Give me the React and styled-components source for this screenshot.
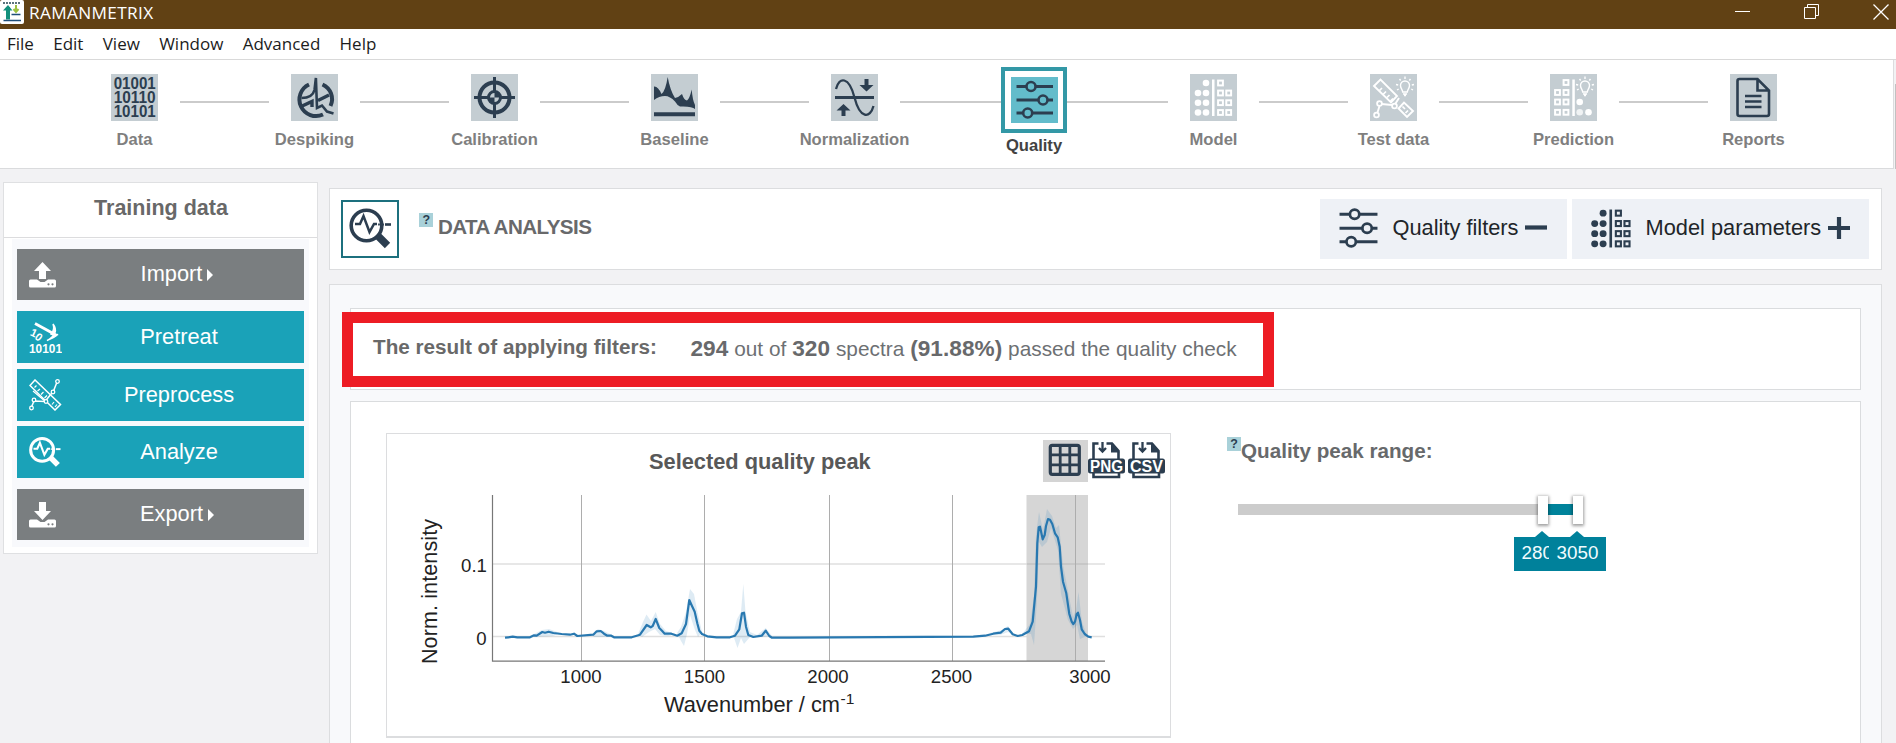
import React from "react";
import styled, { createGlobalStyle } from "styled-components";

const ink = "#2c3e50";
const sans = `"Liberation Sans", Arial, sans-serif`;

const GlobalStyle = createGlobalStyle`
  * { box-sizing: border-box; }
  body { margin: 0; background: #f2f2f4; font-family: ${sans}; overflow: hidden; }
`;

/* ---------- window frame ---------- */
const Window = styled.div`
  display: flex;
  flex-direction: column;
  height: 743px;
  overflow: hidden;
`;
const TitleBar = styled.header`
  display: flex;
  justify-content: space-between;
  height: 29px;
  flex: none;
  background: #614114;
  color: #fff;
`;
const AppTitle = styled.div`
  display: flex;
  align-items: flex-start;
  gap: 5px;
  font: 17.2px/25px "Open Sans", "Noto Sans", sans-serif;
  letter-spacing: 0.35px;
`;
const WindowControls = styled.div`
  display: flex;
  padding: 4px 7px 0 0;
  gap: 54px;
`;
const MenuBar = styled.nav`
  display: flex;
  flex: none;
  gap: 19.3px;
  height: 31px;
  padding-left: 7px;
  background: #fff;
  border-bottom: 1px solid #d9d9d9;
  color: #1c1c1c;
  font: 17px/30px "Open Sans", "Noto Sans", sans-serif;
`;

/* ---------- workflow stepper ---------- */
const StepperRow = styled.div`
  display: flex;
  flex: none;
  height: 109px;
`;
const Stepper = styled.div`
  display: flex;
  align-items: flex-start;
  width: 1894px;
  padding-left: 89px;
  background: #fff;
  border-right: 1px solid #dcdcde;
  border-bottom: 1px solid #dadbdd;
`;
const ScrollThumb = styled.div`
  width: 1px;
  margin: 24px 0 0 1px;
  background: #c1c1c1;
`;
const StepItem = styled.div`
  display: flex;
  flex-direction: column;
  align-items: center;
  flex: none;
  width: ${(p) => (p.$active ? 66 : 91)}px;
  padding-top: ${(p) => (p.$active ? 7 : 14)}px;
`;
const StepTile = styled.div`
  width: 47px;
  height: ${(p) => (p.$active ? 46 : 47)}px;
  background: ${(p) => (p.$active ? "#63bccb" : "#c4cdd2")};
  color: ${(p) => (p.$pale ? "#fff" : ink)};
  svg { display: block; }
`;
const ActiveFrame = styled.div`
  width: 66px;
  height: 66px;
  padding: 6px 5px 6px 6px;
  border: 4px solid #3398a6;
`;
const StepLabel = styled.div`
  margin-top: ${(p) => (p.$active ? 3 : 9)}px;
  font-size: 16.6px;
  line-height: 20px;
  font-weight: bold;
  white-space: nowrap;
  color: ${(p) => (p.$active ? "#424242" : "#7f7f7f")};
`;
const Connector = styled.div`
  flex: none;
  width: ${(p) => p.$length}px;
  height: 2px;
  margin-top: 41px;
  background: #cbcbcb;
`;

/* ---------- sidebar ---------- */
const Body = styled.div`
  display: flex;
  align-items: flex-start;
  flex: 1;
  min-height: 0;
  padding-left: 3px;
`;
const Sidebar = styled.aside`
  flex: none;
  width: 315px;
  height: 372px;
  margin-top: 13px;
  background: #fff;
  border: 1px solid #dfe0e2;
`;
const SidebarTitle = styled.h2`
  margin: 0;
  height: 55px;
  padding-left: 1px;
  border-bottom: 1px solid #dcdcde;
  text-align: center;
  font-size: 21.5px;
  line-height: 50px;
  color: #686868;
`;
const ActionList = styled.div`
  display: flex;
  flex-direction: column;
  width: 297px;
  height: 308px;
  margin: 1px 0 0 8px;
  padding: 10px 5px 0;
  background: #f8f9fc;
`;
const Action = styled.button`
  display: flex;
  align-items: center;
  flex: none;
  height: ${(p) => (p.$teal ? 52 : 51)}px;
  margin: 0 0 ${(p) => p.$gap}px;
  padding: 0 0 0 12px;
  border: 0;
  background: ${(p) => (p.$teal ? "#1aa2b8" : "#7a7e80")};
  color: #fff;
  font: 21.8px/24px ${sans};
  svg { flex: none; }
`;
const ActionText = styled.span`
  flex: 1;
  padding-right: ${(p) => (p.$menu ? 6 : 8)}px;
  padding-bottom: 1px;
  text-align: center;
`;
const Caret = styled.i`
  display: inline-block;
  margin-left: 5px;
  border-left: 6px solid #fff;
  border-top: 6px solid transparent;
  border-bottom: 6px solid transparent;
`;

/* ---------- main column ---------- */
const Main = styled.main`
  flex: none;
  width: 1553px;
  margin: 19px 0 0 11px;
`;
const HeaderCard = styled.section`
  display: flex;
  align-items: flex-start;
  height: 82px;
  padding: 11px 12px 11px 11px;
  background: #fff;
  border: 1px solid #dcdddf;
`;
const AnalysisIcon = styled.div`
  width: 58px;
  height: 58px;
  border: 2px solid #1c707e;
  color: ${ink};
  svg { display: block; }
`;
const HelpBadge = styled.sup`
  flex: none;
  width: 14px;
  height: 14px;
  background: #a9d1d9;
  color: ${ink};
  text-align: center;
  font: bold 12.5px/14px ${sans};
`;
const HeaderTitle = styled.h1`
  display: flex;
  gap: 5px;
  flex: 1;
  margin: 13px 0 0 20px;
  font-size: 20.6px;
  line-height: 28px;
  letter-spacing: -0.55px;
  color: #68696b;
`;
const ToggleButton = styled.button`
  display: flex;
  align-items: center;
  flex: none;
  width: ${(p) => p.$width}px;
  height: 60px;
  margin: -1px 0 0 ${(p) => p.$offset || 0}px;
  padding: 0 0 2px 19px;
  border: 0;
  background: #eef1f6;
  color: ${ink};
  font: 21.8px/24px ${sans};
  svg { flex: none; }
`;
const ToggleText = styled.span`
  margin: 0 7px 0 14.5px;
  color: #212529;
  white-space: nowrap;
`;
const ContentCard = styled.section`
  height: 480px;
  margin-top: 14px;
  padding: 23px 20px 0;
  background: #f8f9fb;
  border: 1px solid #dcdddf;
`;
const Panel = styled.div`
  display: flex;
  position: relative;
  align-items: flex-start;
  height: ${(p) => p.$height}px;
  margin-bottom: 11px;
  padding-left: ${(p) => p.$indent}px;
  background: #fff;
  border: 1px solid #dadcde;
`;
const Highlight = styled.div`
  position: absolute;
  left: -9px;
  top: 3px;
  width: 932px;
  height: 75px;
  border: 11px solid #ed1c24;
`;
const ResultLabel = styled.div`
  width: 317.5px;
  padding-top: 26px;
  font-size: 20.7px;
  line-height: 24px;
  font-weight: bold;
  color: #696969;
`;
const ResultText = styled.div`
  padding-top: 28px;
  font-size: 20.8px;
  line-height: 24px;
  letter-spacing: 0.04px;
  color: #6d7073;
  white-space: nowrap;
  b { font-size: 22.6px; color: #68696b; }
`;

/* ---------- chart ---------- */
const ChartCard = styled.figure`
  flex: none;
  width: 785px;
  height: 305px;
  margin: 31px 0 0;
  border: 1px solid #dcdddf;
  border-bottom-width: 2px;
`;
const ChartHead = styled.div`
  display: flex;
  height: 55px;
  padding-left: 262px;
`;
const ChartTitle = styled.h3`
  width: 394px;
  margin: 15px 0 0;
  font-size: 21.8px;
  line-height: 26px;
  color: #585858;
`;
const ToolButton = styled.span`
  width: ${(p) => p.$width}px;
  height: 42px;
  margin-top: 6px;
  background: ${(p) => (p.$pressed ? "#d4d4d4" : "none")};
  color: ${ink};
  svg { display: block; }
`;
const Plot = styled.svg`
  display: block;
  font-family: ${sans};
`;

/* ---------- range slider ---------- */
const RangeField = styled.div`
  margin: 35px 0 0 56px;
  width: 400px;
`;
const RangeLabel = styled.div`
  display: flex;
  height: 14px;
  font-size: 20.65px;
  line-height: 28px;
  font-weight: bold;
  color: #67696b;
`;
const Track = styled.div`
  position: relative;
  width: 340px;
  height: 11px;
  margin: 53px 0 0 11px;
  background: #ccc;
`;
const Fill = styled.div`
  position: absolute;
  inset: 0 0 0 305px;
  background: #00839b;
`;
const Thumb = styled.div`
  position: absolute;
  top: -8px;
  left: ${(p) => p.$at - 5}px;
  width: 10px;
  height: 28px;
  background: #fff;
  box-shadow: 0 1px 3px 1px rgba(0, 0, 0, 0.38);
`;
const Bubble = styled.div`
  position: absolute;
  top: 33px;
  left: ${(p) => p.$at - 28.5}px;
  width: 57px;
  height: 34px;
  background: #00819b;
  color: #f2fcff;
  text-align: center;
  font-size: 18.8px;
  line-height: 32px;
  &::before {
    content: "";
    position: absolute;
    left: 21px;
    top: -6px;
    border-left: 7px solid transparent;
    border-right: 7px solid transparent;
    border-bottom: 6px solid #00819b;
  }
`;

/* ---------- icons ---------- */
const Svg = ({ size = 47, w = size, h = size, box = "0 0 47 47", children }) => (
  <svg width={w} height={h} viewBox={box} preserveAspectRatio="none" fill="none" stroke="currentColor">
    {children}
  </svg>
);

const DataIcon = () => (
  <Svg>
    <g fill="currentColor" stroke="none" fontFamily="Liberation Sans, Arial, sans-serif" fontWeight="bold" fontSize="16">
      {["01001", "10110", "10101"].map((bits, i) => (
        <text key={bits} x="2.7" y={15.4 + i * 13.8} textLength="42" lengthAdjust="spacingAndGlyphs">{bits}</text>
      ))}
    </g>
  </Svg>
);
const DespikingIcon = () => (
  <Svg>
    <path d="M18 10.5A16 16 0 1 0 32 40.5" strokeWidth="4" />
    <path d="M31.5 10.5A16 16 0 0 1 39.5 32" strokeWidth="4" />
    <path d="M10.5 24C17 24 22 22 23.5 16L24.9 4L26 34L31 31.5L36 37.5L42.5 39.5" strokeWidth="2.6" />
    <path d="M9 33L21 27.5V33M27 26.5L38 21" strokeWidth="3.4" />
  </Svg>
);
const CalibrationIcon = () => (
  <Svg>
    <circle cx="23.5" cy="23.5" r="15" strokeWidth="4" />
    <circle cx="23.5" cy="23.5" r="6" strokeWidth="3" />
    <path d="M3 23.5H19M28 23.5H44M23.5 3V19M23.5 28V44" strokeWidth="3" />
    <path d="M23.5 23.5V18A5.5 5.5 0 0 1 29 23.5ZM23.5 23.5V29A5.5 5.5 0 0 1 18 23.5Z" fill="currentColor" stroke="none" />
  </Svg>
);
const BaselineIcon = () => (
  <Svg>
    <path
      d="M3 12.5Q7 12 10.5 20Q14.5 17 16.7 3Q19 16 24 24Q28 23 31 20Q33 26 36 26.5Q38.5 25 40.7 15.5Q41.5 26 44 31V35Q41 32 29 32.5Q26 31 24 27.5Q19 22 14 22Q8 22 3 26Z"
      fill="currentColor"
      stroke="none"
    />
    <path d="M3 40.2H44" strokeWidth="4" />
  </Svg>
);
const NormalizationIcon = () => (
  <Svg>
    <path d="M4 23.5H43" strokeWidth="3.2" />
    <path d="M5 15C8 2.5 18 2 23.5 23.5S39 45 42.5 32" strokeWidth="2.3" />
    <path d="M33.5 5H37.5V11H42.5L35.5 17.5L28.5 11H33.5ZM10.5 42H14.5V36.5H19.5L12.5 30L5.5 36.5H10.5Z" fill="currentColor" stroke="none" />
  </Svg>
);
const SlidersIcon = ({ w = 47, h = 46, box = "0 0 47 46" }) => (
  <Svg w={w} h={h} box={box}>
    <path d="M5.5 9.5H15.5M24.5 9.5H42M5.5 23H27.5M36 23H42M5.5 36H12.5M21 36H42" strokeWidth="3" />
    <circle cx="20" cy="9.5" r="4.5" strokeWidth="2.6" />
    <circle cx="32" cy="23" r="4.5" strokeWidth="2.6" />
    <circle cx="16.7" cy="36" r="4.5" strokeWidth="2.6" />
  </Svg>
);
const ModelIcon = ({ w = 47, h = 47, box = "0 0 47 47" }) => (
  <Svg w={w} h={h} box={box}>
    <g fill="currentColor" stroke="none">
      {[[16, 9], [8, 19], [16, 19], [8, 28.7], [16, 28.7], [8, 38.5], [16, 38.5]].map(([x, y]) => (
        <circle key={`${x}-${y}`} cx={x} cy={y} r="3.3" />
      ))}
      <rect x="22" y="5.5" width="2.5" height="36.5" />
    </g>
    <g strokeWidth="2">
      {[[30.5, 9], [30.5, 19], [38.7, 19], [30.5, 28.7], [38.7, 28.7], [30.5, 38.5], [38.7, 38.5]].map(([x, y]) => (
        <rect key={`${x}-${y}`} x={x - 2.4} y={y - 2.4} width="4.8" height="4.8" />
      ))}
    </g>
  </Svg>
);
const Bulb = ({ x, y }) => (
  <g transform={`translate(${x} ${y})`} strokeWidth="1.4">
    <path d="M-2.3 4.5C-2.5 2-4.5 1-4.5-2A4.5 4.5 0 0 1 4.5-2C4.5 1 2.5 2 2.3 4.5ZM-2 6.5H2M-1 8H1M0-11V-8.5M-5.5-8.5L-4.3-7M5.5-8.5L4.3-7M-9-3L-6.8-2.5M9-3L6.8-2.5M-8 2.5L-6.3 1.5M8 2.5L6.3 1.5" />
  </g>
);
const TestDataIcon = () => (
  <Svg>
    <path d="M4 12L10.5 5.5L27 22L21 28.5ZM28.5 34.5L34 28.5L43 37L37 43Z" strokeWidth="1.9" />
    <path d="M12 14L9.5 16.5M16 17.5L13 20.5M19.5 21L17 23.5M23 24.5L20.5 27M32.5 32.5L35 35M35.5 39L38 36.5" strokeWidth="1.7" />
    <path d="M7.5 38.5L9.5 32M11.5 30L22 31M25.5 29.5L29 24" strokeWidth="1.9" />
    <circle cx="6.5" cy="41" r="2.4" strokeWidth="1.8" />
    <circle cx="9.5" cy="29.5" r="2.4" strokeWidth="1.8" />
    <circle cx="24.5" cy="32" r="2.4" strokeWidth="1.8" />
    <Bulb x={35} y={13.5} />
  </Svg>
);
const PredictionIcon = () => (
  <Svg>
    <g strokeWidth="2">
      {[[16, 8.5], [7.5, 18.5], [16, 18.5], [7.5, 28], [16, 28], [7.5, 38.3], [16, 38.3]].map(([x, y]) => (
        <rect key={`${x}-${y}`} x={x - 2.4} y={y - 2.4} width="4.8" height="4.8" />
      ))}
    </g>
    <g fill="currentColor" stroke="none">
      <rect x="22.3" y="5.5" width="2.5" height="36.5" />
      <circle cx="29.7" cy="28" r="3.3" />
      <circle cx="29.7" cy="38.3" r="3.3" opacity=".75" />
      <circle cx="38.5" cy="38.3" r="3.3" />
    </g>
    <Bulb x={35} y={13.5} />
  </Svg>
);
const ReportIcon = () => (
  <Svg>
    <path d="M27.5 5H9.5Q7.5 5 7.5 7V40Q7.5 42 9.5 42H37Q39 42 39 40V16.5ZM27.5 5V16.5H39" strokeWidth="2.6" />
    <path d="M15 22H31.5M15 27.5H31.5M15 33H31.5" strokeWidth="2.4" />
  </Svg>
);
const MagnifierIcon = ({ size = 54, weight = 3.6, box = "0 0 54 54" }) => (
  <Svg size={size} box={box}>
    <circle cx="23.5" cy="23.5" r="15.3" strokeWidth={weight} />
    <path d="M12 22H17L20.5 14L26.5 30L31 22H34" strokeWidth={weight * 0.7} />
    <path d="M42 22.5H48" strokeWidth="2.6" />
    <path d="M34.5 33.5L44.5 43.5" strokeWidth="7.5" />
    <path d="M35 22.5H41" strokeWidth="2" opacity=".9" />
  </Svg>
);
const TransferIcon = ({ up }) => (
  <Svg w={27} h={26} box="0 0 27 26">
    <g fill="currentColor" stroke="none">
      {up ? <path d="M13.5 0L22 9H17V17H10V9H5Z" /> : <path d="M10 0H17V9H22L13.5 18L5 9H10Z" />}
      <path d="M1.5 17.5H8L11.5 20H15.5L19 17.5H25.5Q27 17.5 27 19V24Q27 25.5 25.5 25.5H1.5Q0 25.5 0 24V19Q0 17.5 1.5 17.5Z" />
    </g>
    <g fill="#7a7e80" stroke="none">
      <circle cx="19.5" cy="22.3" r="1.1" />
      <circle cx="23.5" cy="22.3" r="1.1" />
    </g>
  </Svg>
);
const PretreatIcon = () => (
  <Svg w={33} h={32} box="0 0 33 32">
    <path d="M6 2.500L27 14" strokeWidth="2.8" />
    <path d="M24 3Q31 12 18 19.500Q25 17 29 13.500Q25 14.500 22 13Q26 9 24 3Z" fill="currentColor" strokeWidth="1.4" />
    <g fill="currentColor" stroke="none" fontFamily="Liberation Sans, Arial, sans-serif" fontWeight="bold">
      <text x="0" y="31.5" fontSize="12.5" textLength="33" lengthAdjust="spacingAndGlyphs">10101</text>
      <text transform="translate(0.500 14) rotate(25)" fontSize="11">1</text>
      <text transform="translate(5 17) rotate(40)" fontSize="11">0</text>
    </g>
  </Svg>
);
const PreprocessIcon = () => (
  <Svg w={33} h={32} box="0 0 33 32">
    <path d="M1 6.5L6 1L31.5 25.5L26 31Z" strokeWidth="1.5" />
    <path d="M7.5 6.5L5.5 8.5M11 10L8.500 12M14.5 13L12 15.5M18 16.5L15.5 19M25 23L23 25.5M28 25.5L26 28M4 12L17 23" strokeWidth="1.2" />
    <path d="M2.5 28L5 22L16 22.5L24.5 12L28 3" strokeWidth="1.5" />
    <g fill="#1aa2b8" strokeWidth="1.3">
      <circle cx="2.5" cy="29" r="1.8" /><circle cx="5" cy="21" r="1.8" />
      <circle cx="17" cy="22.5" r="1.8" /><circle cx="24" cy="13" r="1.8" /><circle cx="28.5" cy="2.5" r="1.8" />
    </g>
  </Svg>
);
const GridIcon = () => (
  <Svg w={44} h={42} box="0 0 44 42">
    <rect x="7.3" y="5.3" width="29" height="29" rx="2" strokeWidth="3.2" />
    <path d="M17.2 5V35M26.8 5V35M7 14.8H37M7 24.8H37" strokeWidth="2.8" />
  </Svg>
);
const FileTypeIcon = ({ label }) => (
  <Svg w={37} h={42} box="0 0 37 42">
    <path d="M5.5 20V3.5H10.500M18.500 3.5H24L30.5 11V20M5.5 32V37H31V32" strokeWidth="2.6" />
    <path d="M23 2.5L31.5 12.5H23Z" fill="currentColor" stroke="none" />
    <path d="M14.500 2V11M11 8L14.500 11.500L18 8" strokeWidth="2.3" />
    <rect x="0" y="18.5" width="37" height="15" rx="2.5" fill="currentColor" stroke="none" />
    <path d="M8 34.500H29" stroke="#fff" strokeWidth="1.100" />
    <text x="2" y="31.5" textLength="33" lengthAdjust="spacingAndGlyphs" fontSize="15.8" fontWeight="bold" fill="#fff" stroke="none" fontFamily="Liberation Sans, Arial, sans-serif">
      {label}
    </text>
  </Svg>
);
const AppLogo = () => (
  <Svg w={24} h={24} box="0 0 24 24">
    <rect width="24" height="24" rx="2" fill="#fff" stroke="none" />
    <path d="M3 3H21" stroke="#264653" strokeWidth="1.5" strokeDasharray="2 1" />
    <path d="M8 19.5V7" stroke="#12907c" strokeWidth="4" />
    <path d="M3 10.5L8 5L12.5 10.5Z" fill="#12907c" stroke="none" />
    <path d="M16 5V11M13.5 9L16 12L18.5 9" stroke="#9cc040" strokeWidth="2" />
    <path d="M11.5 14.5H20.5M3.5 20.5H21" stroke="#1f4e79" strokeWidth="1.6" />
  </Svg>
);

/* ---------- spectrum data (plot coordinates) ---------- */
const spectrum =
  "505,637.7 508.3,637.3 512.7,636.7 517.3,637.3 530,637.3 534,635.3 536.7,635.7 542.3,632 545,632.7 548.7,631.7 553.3,633 561.7,634 570,634.7 574,633.7 577.3,636 593.3,634.7 596.7,631.3 600.7,631 604,633.7 607.3,635.7 611.3,635.7 614,637.3 631.7,637.3 640,634.7 646.7,625 650.7,627.3 652.7,626 655.7,619 659.3,628 662,630.7 664.7,633.7 671.3,633.7 677.3,635.7 681.7,633.3 686,624 689.3,600 692,606 694.7,611.7 697.3,623.3 699.3,630.7 702,634 707.3,636.3 716.7,637.3 730,637.3 735,635.7 739.3,629.3 742,613.3 744,612.7 746,626.7 748.3,635 753.3,637 761.7,635.7 765.7,630.7 769.3,636 772,637.7 790,637.7 973.3,636.7 985,635.7 993.3,633.7 1000.7,632.7 1005,629 1008.3,628.7 1012.7,634.3 1017.7,636 1022.3,635 1029,631.3 1032.7,621.7 1036,586.7 1037.3,543.3 1038.7,527.3 1040,526.7 1042.7,539.3 1044.7,535 1046,526 1048,519 1050,519.7 1052.3,524 1055,533.3 1057.7,537.3 1059.7,546.7 1061,566.7 1063,581.7 1066.3,593.3 1069.3,614 1071.7,621.7 1073.3,624 1075,621.7 1076.7,614.3 1078,612.7 1080,620 1081.7,629.3 1084.7,634 1088.3,636.7 1091.7,637.3";
const spread = [
  "534,634 542,630 549,629 560,633 553,636 536,637",
  "592,634 598,629 604,631 612,635 604,637 594,637",
  "638,634 643,622 646.5,614.5 651,621 655.7,612 660,624 666,631 676,634 668,636 660,635 655,629 649,632 642,637",
  "677,633 681,627 686,612 690,589 694,594 697,610 702,632 698,637 695,630 690,615 687,634 684,646 681,641",
  "733,635 737,619 741,612 743.3,584 745.5,612 750,632 757,635 765.7,628 772,636 764,637 750,637 744,644 741,638 737.5,648",
  "990,633 1002,630 1008,626 1013,634 1008,632 1000,635",
  "1022,634 1030,624 1034,596 1036,535 1039,512 1043,530 1047,509 1052,516 1056,528 1059,525 1063,565 1067,586 1073,617 1076,610 1078.5,592 1082,622 1087,636 1080,639 1077,625 1073,629 1068,620 1061,594 1058,550 1051,528 1047,542 1042,547 1039,542 1037,600 1034,645 1031,634",
];

function SpectrumPlot() {
  return (
    <Plot width="783" height="246" viewBox="387 489 783 246">
      <path d="M493 564H1105M493 636.5H1105" stroke="#dfdfdf" strokeWidth="1.3" />
      <rect x="1026.5" y="495" width="61.5" height="166" fill="#d6d6d6" />
      <path d="M1027 564H1088" stroke="#c2c2c2" strokeWidth="1.3" />
      <path d="M581.5 495V661M704.5 495V661M829.5 495V661M952.5 495V661M1075.5 495V661" stroke="#adadad" />
      {spread.map((points) => (
        <polygon key={points} points={points} fill="#1f77b4" opacity=".15" />
      ))}
      <path d="M492.5 495V661.2H1105" fill="none" stroke="#777" strokeWidth="1.2" />
      <polyline points={spectrum} fill="none" stroke="#2878b0" strokeWidth="2.2" strokeLinejoin="round" />
      <g fontSize="18.6" fill="#222" textAnchor="middle">
        <text x="581" y="683">1000</text>
        <text x="704.5" y="683">1500</text>
        <text x="828" y="683">2000</text>
        <text x="951.5" y="683">2500</text>
        <text x="1090" y="683">3000</text>
        <text x="474" y="571.5">0.1</text>
        <text x="481.5" y="645">0</text>
      </g>
      <g fill="#222">
        <text x="664" y="711.7" fontSize="21.8" textLength="176">Wavenumber / cm</text>
        <text x="840.5" y="704" fontSize="15.5">-1</text>
        <text transform="translate(437 664) rotate(-90)" fontSize="21.5" textLength="145">Norm. intensity</text>
      </g>
    </Plot>
  );
}

const steps = [
  { label: "Data", Icon: DataIcon },
  { label: "Despiking", Icon: DespikingIcon },
  { label: "Calibration", Icon: CalibrationIcon },
  { label: "Baseline", Icon: BaselineIcon },
  { label: "Normalization", Icon: NormalizationIcon, line: 101 },
  { label: "Quality", Icon: SlidersIcon, active: true, line: 101 },
  { label: "Model", Icon: ModelIcon, pale: true },
  { label: "Test data", Icon: TestDataIcon, pale: true },
  { label: "Prediction", Icon: PredictionIcon, pale: true },
  { label: "Reports", Icon: ReportIcon, line: 0 },
];

const actions = [
  { label: "Import", icon: <TransferIcon up />, menu: true, gap: 11 },
  { label: "Pretreat", icon: <PretreatIcon />, teal: true, gap: 6 },
  { label: "Preprocess", icon: <PreprocessIcon />, teal: true, gap: 5 },
  { label: "Analyze", icon: <MagnifierIcon size={33} weight={4} box="6 5 44 44" />, teal: true, gap: 11 },
  { label: "Export", icon: <TransferIcon />, menu: true, gap: 0 },
];

function Step({ label, Icon, active, pale }) {
  const tile = (
    <StepTile $active={active} $pale={pale}>
      <Icon />
    </StepTile>
  );
  return (
    <StepItem $active={active}>
      {active ? <ActiveFrame>{tile}</ActiveFrame> : tile}
      <StepLabel $active={active}>{label}</StepLabel>
    </StepItem>
  );
}

export default function App() {
  return (
    <Window>
      <GlobalStyle />
      <TitleBar>
        <AppTitle>
          <AppLogo />
          RAMANMETRIX
        </AppTitle>
        <WindowControls>
          <Svg w={15} h={15} box="0 0 15 15"><path d="M0 7.5H15" /></Svg>
          <Svg w={15} h={15} box="0 0 15 15"><path d="M.5 3.5H11.5V14.5H.5ZM3.5 3.5V.5H14.5V11.5H11.5" /></Svg>
          <Svg w={16} h={16} box="0 0 16 16"><path d="M.5 .5L15.5 15.5M15.5 .5L.5 15.5" strokeWidth="1.3" /></Svg>
        </WindowControls>
      </TitleBar>
      <MenuBar>
        {["File", "Edit", "View", "Window", "Advanced", "Help"].map((m) => (
          <span key={m}>{m}</span>
        ))}
      </MenuBar>
      <StepperRow>
        <Stepper>
          {steps.map((s) => (
            <React.Fragment key={s.label}>
              <Step {...s} />
              <Connector $length={s.line ?? 89} />
            </React.Fragment>
          ))}
        </Stepper>
        <ScrollThumb />
      </StepperRow>
      <Body>
        <Sidebar>
          <SidebarTitle>Training data</SidebarTitle>
          <ActionList>
            {actions.map((a) => (
              <Action key={a.label} $teal={a.teal} $gap={a.gap}>
                {a.icon}
                <ActionText $menu={a.menu}>
                  {a.label}
                  {a.menu && <Caret />}
                </ActionText>
              </Action>
            ))}
          </ActionList>
        </Sidebar>
        <Main>
          <HeaderCard>
            <AnalysisIcon><MagnifierIcon /></AnalysisIcon>
            <HeaderTitle>
              <HelpBadge>?</HelpBadge>
              DATA ANALYSIS
            </HeaderTitle>
            <ToggleButton $width={247}>
              <SlidersIcon w={39} h={42} box="5 2.5 37.5 40.5" />
              <ToggleText>Quality filters</ToggleText>
              <Svg w={22} h={22} box="0 0 22 22"><path d="M0 10.5H22" strokeWidth="4.2" /></Svg>
            </ToggleButton>
            <ToggleButton $width={297} $offset={5}>
              <ModelIcon w={40} h={39} box="4.5 5 38 37.5" />
              <ToggleText>Model parameters</ToggleText>
              <Svg w={22} h={22} box="0 0 22 22"><path d="M0 11H22M11 0V22" strokeWidth="4.2" /></Svg>
            </ToggleButton>
          </HeaderCard>
          <ContentCard>
            <Panel $height={82} $indent={22}>
              <ResultLabel>The result of applying filters:</ResultLabel>
              <ResultText>
                <b>294</b> out of <b>320</b> spectra <b>(91.88%)</b> passed the quality check
              </ResultText>
              <Highlight />
            </Panel>
            <Panel $height={380} $indent={35}>
              <ChartCard>
                <ChartHead>
                  <ChartTitle>Selected quality peak</ChartTitle>
                  <ToolButton $width={45} $pressed><GridIcon /></ToolButton>
                  <ToolButton $width={40}><FileTypeIcon label="PNG" /></ToolButton>
                  <ToolButton $width={37}><FileTypeIcon label="CSV" /></ToolButton>
                </ChartHead>
                <SpectrumPlot />
              </ChartCard>
              <RangeField>
                <RangeLabel>
                  <HelpBadge>?</HelpBadge>
                  Quality peak range:
                </RangeLabel>
                <Track>
                  <Fill />
                  <Thumb $at={304.5} />
                  <Thumb $at={339.5} />
                  <Bubble $at={304.5}>2800</Bubble>
                  <Bubble $at={339.5}>3050</Bubble>
                </Track>
              </RangeField>
            </Panel>
          </ContentCard>
        </Main>
      </Body>
    </Window>
  );
}
